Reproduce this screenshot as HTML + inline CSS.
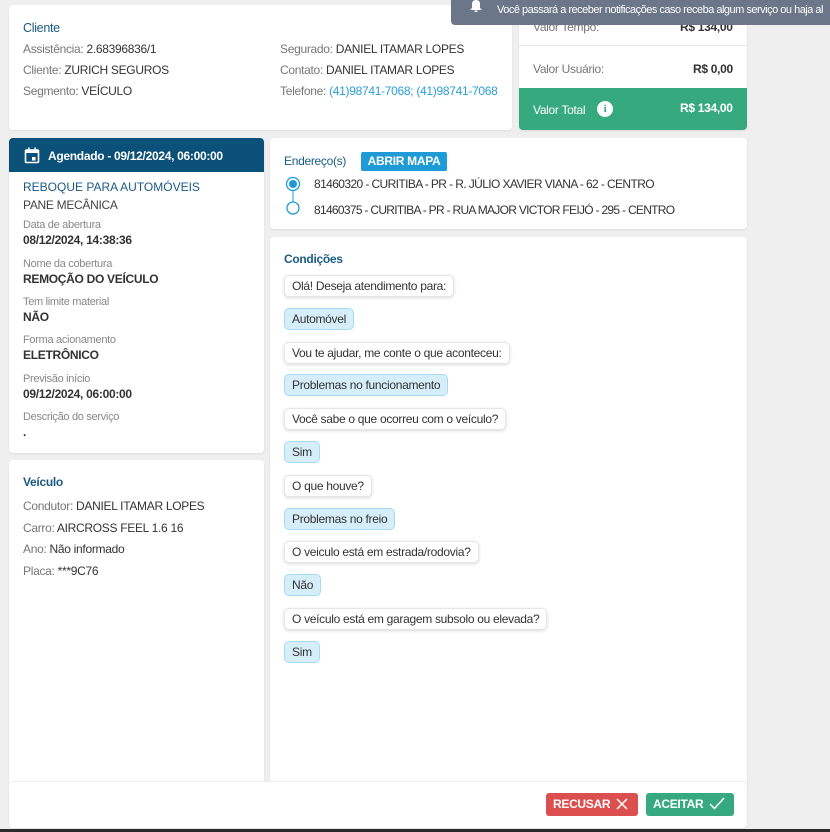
<!DOCTYPE html>
<html><head><meta charset="utf-8"><style>
*{margin:0;padding:0;box-sizing:border-box}
body{width:830px;height:832px;background:#efefef;font-family:"Liberation Sans",sans-serif;font-size:12px;color:#333;position:relative;overflow:hidden;letter-spacing:-0.3px}
.c{position:absolute;background:#fff;border-radius:4px;box-shadow:0 1px 2px rgba(0,0,0,.08)}
.a{position:absolute;white-space:nowrap}
.g{color:#777}
.h{color:#1a5b85;font-weight:bold}
.b{font-weight:bold}
.lb{font-size:11px;color:#888}
.bub{position:absolute;left:284px;height:22px;line-height:20px;padding:0 7px;border-radius:5px;background:#fff;border:1px solid #e6e6e6;box-shadow:0 1px 3px rgba(0,0,0,.15);white-space:nowrap}
.ans{background:#d6eef9;border:1px solid #a9d9f0;box-shadow:none}
</style></head><body>
<div class="c" style="left:9px;top:5px;width:503px;height:125px"></div>
<div class="a h" style="left:23px;top:21px;font-weight:normal;font-size:12.5px">Cliente</div>
<div class="a" style="left:23px;top:42px"><span class="g">Assistência:</span> 2.68396836/1</div>
<div class="a" style="left:23px;top:63px"><span class="g">Cliente:</span> ZURICH SEGUROS</div>
<div class="a" style="left:23px;top:84px"><span class="g">Segmento:</span> VEÍCULO</div>
<div class="a" style="left:280px;top:42px"><span class="g">Segurado:</span> DANIEL ITAMAR LOPES</div>
<div class="a" style="left:280px;top:63px"><span class="g">Contato:</span> DANIEL ITAMAR LOPES</div>
<div class="a" style="left:280px;top:84px"><span class="g">Telefone:</span> <span style="color:#2a9fd8">(41)98741-7068; (41)98741-7068</span></div>
<div class="c" style="left:519px;top:-5px;width:228px;height:135px;overflow:hidden">
<div style="position:absolute;left:0;top:50px;width:228px;height:1px;background:#e8e8e8"></div>
<div style="position:absolute;left:0;top:93px;width:228px;height:42px;background:#37a97f"></div>
</div>
<div class="a g" style="left:533px;top:20px">Valor Tempo:</div>
<div class="a b" style="left:680px;top:20px">R$ 134,00</div>
<div class="a g" style="left:533px;top:62px">Valor Usuário:</div>
<div class="a b" style="left:693px;top:62px">R$ 0,00</div>
<div class="a" style="left:533px;top:103px;color:#fff">Valor Total</div>
<div class="a" style="left:597px;top:101px;width:16px;height:16px;border-radius:50%;background:#fff;color:#37a97f;font-weight:bold;font-size:11px;text-align:center;line-height:16px;font-family:'Liberation Serif',serif">i</div>
<div class="a b" style="left:680px;top:101px;color:#fff">R$ 134,00</div>
<div class="a" style="left:451px;top:-4px;width:390px;height:29px;background:#6b7689;border-radius:4px;color:#fff;font-size:11px;line-height:20px;padding-top:4px;padding-left:46px;letter-spacing:-0.5px">Você passará a receber notificações caso receba algum serviço ou haja al</div>
<svg class="a" style="left:469px;top:0" width="14" height="12" viewBox="0 0 14 12"><path d="M7 0C4 0 3 2 3 4v4L1 10h12l-2-2V4c0-2-1-4-4-4z" fill="#fff"/><rect x="5.5" y="10.5" width="3" height="1.5" fill="#fff"/></svg>
<div class="c" style="left:9px;top:138px;width:255px;height:315px;overflow:hidden"><div style="height:34px;background:#0b5079"></div></div>
<svg class="a" style="left:24px;top:147px" width="16" height="17" viewBox="0 0 16 17"><rect x="1.5" y="3" width="13" height="12.5" rx="1" fill="none" stroke="#fff" stroke-width="1.6"/><rect x="1.5" y="3" width="13" height="3" fill="#fff"/><rect x="4" y="0.5" width="1.6" height="3" fill="#fff"/><rect x="10.4" y="0.5" width="1.6" height="3" fill="#fff"/><rect x="8" y="10" width="3.5" height="3.5" fill="#fff"/></svg>
<div class="a b" style="left:48px;top:149px;color:#fff">Agendado - 09/12/2024, 06:00:00</div>
<div class="a" style="left:23px;top:180px;color:#1a5b85;letter-spacing:0">REBOQUE PARA AUTOMÓVEIS</div>
<div class="a" style="left:23px;top:198px;color:#444">PANE MECÂNICA</div>
<div class="a lb" style="left:23px;top:219px">Data de abertura</div>
<div class="a b" style="left:23px;top:233px">08/12/2024, 14:38:36</div>
<div class="a lb" style="left:23px;top:258px">Nome da cobertura</div>
<div class="a b" style="left:23px;top:272px">REMOÇÃO DO VEÍCULO</div>
<div class="a lb" style="left:23px;top:296px">Tem limite material</div>
<div class="a b" style="left:23px;top:310px">NÃO</div>
<div class="a lb" style="left:23px;top:334px">Forma acionamento</div>
<div class="a b" style="left:23px;top:348px">ELETRÔNICO</div>
<div class="a lb" style="left:23px;top:373px">Previsão início</div>
<div class="a b" style="left:23px;top:387px">09/12/2024, 06:00:00</div>
<div class="a lb" style="left:23px;top:411px">Descrição do serviço</div>
<div class="a b" style="left:23px;top:425px">.</div>
<div class="c" style="left:9px;top:460px;width:255px;height:325px"></div>
<div class="a h" style="left:23px;top:475px">Veículo</div>
<div class="a" style="left:23px;top:499px"><span class="g">Condutor:</span> DANIEL ITAMAR LOPES</div>
<div class="a" style="left:23px;top:521px"><span class="g">Carro:</span> AIRCROSS FEEL 1.6 16</div>
<div class="a" style="left:23px;top:542px"><span class="g">Ano:</span> Não informado</div>
<div class="a" style="left:23px;top:564px"><span class="g">Placa:</span> ***9C76</div>
<div class="c" style="left:270px;top:138px;width:477px;height:91px"></div>
<div class="a" style="left:284px;top:154px;color:#1a5b85">Endereço(s)</div>
<div class="a b" style="left:361px;top:152px;width:86px;height:19px;background:#1e9bd7;color:#fff;border-radius:2px;text-align:center;line-height:19px">ABRIR MAPA</div>
<svg class="a" style="left:285px;top:176px" width="16" height="40" viewBox="0 0 16 40"><line x1="8" y1="15" x2="8" y2="27" stroke="#1e9bd7"/><circle cx="8" cy="8" r="6.5" fill="none" stroke="#1e9bd7" stroke-width="1.3"/><circle cx="8" cy="8" r="4" fill="#1e9bd7"/><circle cx="8" cy="32" r="6" fill="#fff" stroke="#1e9bd7" stroke-width="1.3"/></svg>
<div class="a" style="left:314px;top:177px;letter-spacing:-0.6px">81460320 - CURITIBA - PR - R. JÚLIO XAVIER VIANA - 62 - CENTRO</div>
<div class="a" style="left:314px;top:203px;letter-spacing:-0.7px">81460375 - CURITIBA - PR - RUA MAJOR VICTOR FEIJÓ - 295 - CENTRO</div>
<div class="c" style="left:270px;top:237px;width:477px;height:548px"></div>
<div class="a h" style="left:284px;top:252px">Condições</div>
<div class="bub" style="top:275px">Olá! Deseja atendimento para:</div>
<div class="bub ans" style="top:308px">Automóvel</div>
<div class="bub" style="top:342px">Vou te ajudar, me conte o que aconteceu:</div>
<div class="bub ans" style="top:374px">Problemas no funcionamento</div>
<div class="bub" style="top:408px">Você sabe o que ocorreu com o veículo?</div>
<div class="bub ans" style="top:441px">Sim</div>
<div class="bub" style="top:475px">O que houve?</div>
<div class="bub ans" style="top:508px">Problemas no freio</div>
<div class="bub" style="top:541px">O veiculo está em estrada/rodovia?</div>
<div class="bub ans" style="top:574px">Não</div>
<div class="bub" style="top:608px">O veículo está em garagem subsolo ou elevada?</div>
<div class="bub ans" style="top:641px">Sim</div>
<div class="c" style="left:9px;top:781px;width:738px;height:47px;border-top:1px solid #eee"></div>
<div class="a b" style="left:546px;top:793px;width:92px;height:23px;background:#dc4f4f;color:#fff;border-radius:3px;line-height:23px;padding-left:7px">RECUSAR</div>
<svg class="a" style="left:616px;top:798px" width="12" height="12" viewBox="0 0 12 12"><path d="M1 1L11 11M11 1L1 11" stroke="#fff" stroke-width="1.5"/></svg>
<div class="a b" style="left:646px;top:793px;width:88px;height:23px;background:#36a981;color:#fff;border-radius:3px;line-height:23px;padding-left:7px">ACEITAR</div>
<svg class="a" style="left:709px;top:797px" width="16" height="13" viewBox="0 0 16 13"><path d="M1 7L5.5 11.5L15 1" fill="none" stroke="#fff" stroke-width="1.5"/></svg>
<div class="a" style="left:0;top:829px;width:830px;height:3px;background:#2b2b2b"></div>
</body></html>
